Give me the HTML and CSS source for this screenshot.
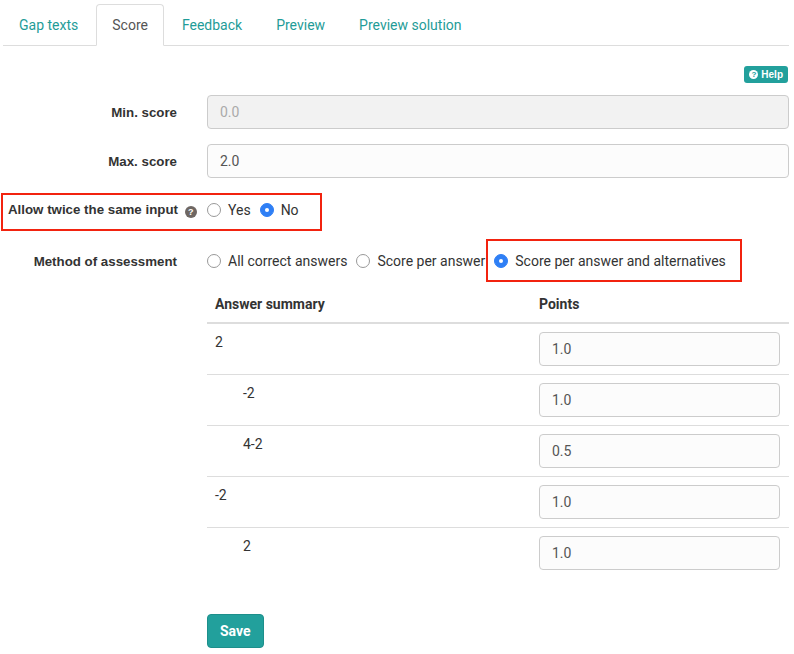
FILE: index.html
```html
<!DOCTYPE html>
<html>
<head>
<meta charset="utf-8">
<link rel="stylesheet" href="styles.css">
</head>
<body>
<div class="page">
  <ul class="tabs">
    <li class="tab">Gap texts</li>
    <li class="tab active">Score</li>
    <li class="tab">Feedback</li>
    <li class="tab">Preview</li>
    <li class="tab">Preview solution</li>
  </ul>
  <div class="helpbar"><span class="help"><span class="help-ico">?</span>Help</span></div>
  <div class="form">
    <div class="row">
      <label class="lbl">Min. score</label>
      <div class="ctrl"><div class="input disabled">0.0</div></div>
    </div>
    <div class="row">
      <label class="lbl">Max. score</label>
      <div class="ctrl"><div class="input">2.0</div></div>
    </div>
    <div class="row radio-row row-allow">
      <label class="lbl">Allow twice the same input <span class="q">?</span></label>
      <div class="ctrl radios">
        <span class="radio"><span class="dot"></span>Yes</span>
        <span class="radio"><span class="dot on"></span>No</span>
      </div>
      <div class="mark mark-allow"></div>
    </div>
    <div class="row radio-row row-method">
      <label class="lbl">Method of assessment</label>
      <div class="ctrl radios">
        <span class="radio"><span class="dot"></span>All correct answers</span>
        <span class="radio"><span class="dot"></span>Score per answer</span>
        <span class="radio"><span class="dot on"></span>Score per answer and alternatives</span>
      </div>
      <div class="mark mark-method"></div>
    </div>
    <div class="row">
      <div></div>
      <table class="tbl">
        <thead>
          <tr><th class="c1">Answer summary</th><th>Points</th></tr>
        </thead>
        <tbody>
          <tr><td class="c1">2</td><td><div class="input sm">1.0</div></td></tr>
          <tr><td class="c1 sub">-2</td><td><div class="input sm">1.0</div></td></tr>
          <tr><td class="c1 sub">4-2</td><td><div class="input sm">0.5</div></td></tr>
          <tr><td class="c1">-2</td><td><div class="input sm">1.0</div></td></tr>
          <tr><td class="c1 sub">2</td><td><div class="input sm">1.0</div></td></tr>
        </tbody>
      </table>
    </div>
    <div class="row buttons">
      <div></div>
      <div><button class="btn">Save</button></div>
    </div>
  </div>
</div>
</body>
</html>
```
FILE: styles.css
```css
* { box-sizing: border-box; }
html, body { margin: 0; padding: 0; background: #fff; }
body { font-family: Roboto, "Liberation Sans", Arial, sans-serif; font-size: 14px; color: #333; }
.page { width: 794px; padding: 4px 5px 0 3px; }

.tabs { list-style: none; margin: 0; padding: 0; display: flex; border-bottom: 1px solid #ddd; }
.tab { padding: 10px 15px; line-height: 20px; color: #1f9c98; margin-right: 2px; margin-bottom: -1px; border: 1px solid transparent; border-radius: 4px 4px 0 0; }
.tab.active { color: #555; background: #fff; border-color: #ddd; border-bottom-color: #fff; }

.helpbar { display: flex; justify-content: flex-end; padding: 20px 1px 0 0; height: 49px; }
.help { display: inline-flex; align-items: center; gap: 3px; background: #22a09c; color: #fff; font-size: 10px; font-weight: bold; font-family: "Liberation Sans", Arial, sans-serif; height: 17px; padding: 0 5px 0 5px; border-radius: 3px; }
.help-ico { width: 9px; height: 9px; border-radius: 50%; background: #fff; color: #22a09c; font-size: 8px; line-height: 9px; text-align: center; font-weight: bold; }

.form { display: flex; flex-direction: column; }
.row { display: grid; grid-template-columns: 174px 1fr; column-gap: 30px; align-items: center; margin-bottom: 15px; position: relative; }
.lbl { text-align: right; font-family: "Liberation Sans", Arial, sans-serif; font-weight: bold; font-size: 13.3px; color: #333; }
.input { height: 34px; border: 1px solid #ccc; border-radius: 4px; padding: 0 12px; line-height: 32px; background: #fcfcfc; color: #555; font-size: 14px; }
.input.disabled { background: #f2f2f2; color: #aaa; }

.radio-row { height: 34px; }
.row-allow .lbl { text-align: left; margin-left: 5px; white-space: nowrap; }
.row-method { margin-top: 2px; margin-bottom: 8px; }
.radios { display: flex; align-items: center; gap: 9px; color: #333; }
.radio { display: inline-flex; align-items: center; gap: 7px; white-space: nowrap; }
.dot { width: 14px; height: 14px; border-radius: 50%; border: 1px solid #999; background: #fff; position: relative; }
.dot.on { background: #2f7ff5; border-color: #2f7ff5; }
.dot.on::after { content: ""; position: absolute; left: 4px; top: 4px; width: 4px; height: 4px; border-radius: 50%; background: #fff; }
.q { display: inline-block; width: 12px; height: 12px; border-radius: 50%; background: #6e6763; color: #fff; font-size: 9px; line-height: 12px; text-align: center; vertical-align: -1px; margin-left: 3px; }

.mark { position: absolute; border: 2px solid #f2230f; pointer-events: none; }
.mark-allow { left: -2px; top: 0; width: 321px; height: 38px; }
.mark-method { left: 483px; top: -5px; width: 256px; height: 43px; }

.tbl { border-collapse: collapse; width: 582px; font-size: 14px; color: #333; }
.tbl th { text-align: left; font-weight: bold; padding: 8px; line-height: 20px; border-bottom: 2px solid #ddd; }
.tbl td { padding: 8px 9px 8px 8px; line-height: 20px; vertical-align: top; border-top: 1px solid #ddd; }
.tbl tbody tr:first-child td { border-top: none; }
.tbl tbody tr:last-child td { border-bottom: 1px solid transparent; }
.tbl .c1 { width: 324px; }
.tbl td.sub { padding-left: 36px; }
.input.sm { height: 34px; line-height: 32px; }

.buttons { margin-top: 20px; }
.btn { background: #22a09c; color: #fff; border: 1px solid #1d8f8b; border-radius: 4px; font-family: Roboto, "Liberation Sans", sans-serif; font-weight: bold; font-size: 14px; height: 34px; padding: 0 12px; }
```
